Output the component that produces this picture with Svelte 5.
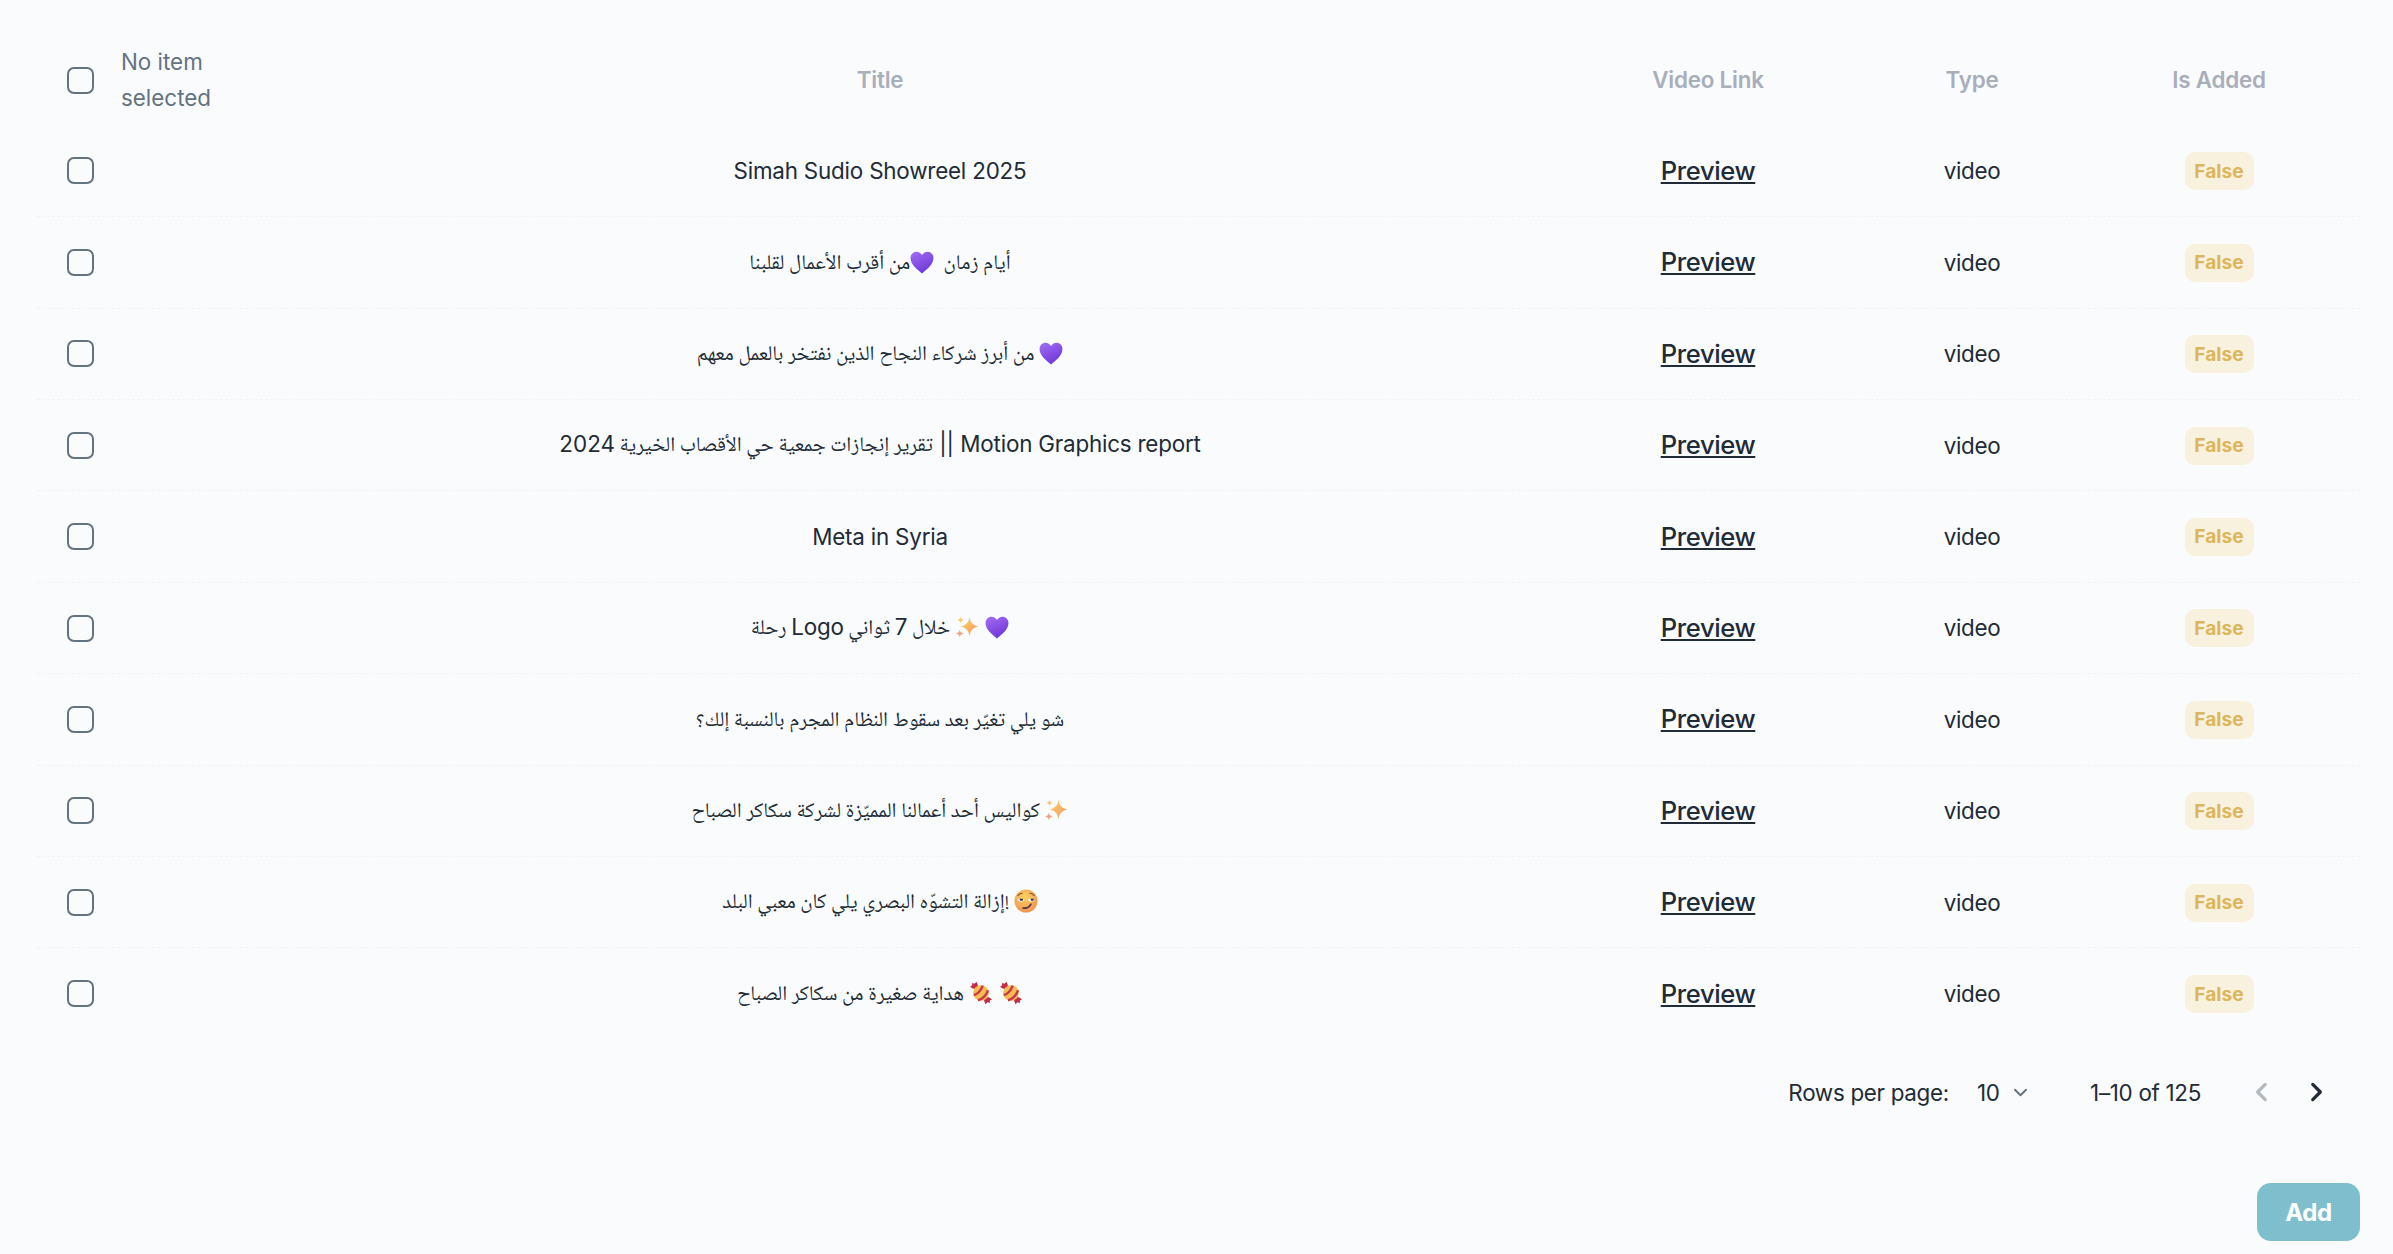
<script lang="ts">
	const rows = [
		{ dir: 'ltr', parts: ['Simah Sudio Showreel 2025'] },
		{ dir: 'rtl', parts: ['أيام زمان\u00a0\u00a0', 'heart', 'من أقرب الأعمال لقلبنا'] },
		{ dir: 'rtl', parts: ['heart', ' من أبرز شركاء النجاح الذين نفتخر بالعمل معهم'] },
		{ dir: 'ltr', parts: ['تقرير إنجازات جمعية حي الأقصاب الخيرية ', '2024', ' ', '|| Motion Graphics report'] },
		{ dir: 'ltr', parts: ['Meta in Syria'] },
		{ dir: 'rtl', parts: ['heart', ' ', 'sparkles', ' خلال ', '7', ' ثواني ', 'Logo', ' رحلة'] },
		{ dir: 'rtl', parts: ['شو يلي تغيّر بعد سقوط النظام المجرم بالنسبة إلك؟'] },
		{ dir: 'rtl', parts: ['sparkles', ' كواليس أحد أعمالنا المميّزة لشركة سكاكر الصباح'] },
		{ dir: 'rtl', parts: ['face', ' !إزالة التشوّه البصري يلي كان معبي البلد'] },
		{ dir: 'rtl', parts: ['candy', ' ', 'candy', ' هداية صغيرة من سكاكر الصباح'] }
	];

	const isLatin = (part: string) => /^[\x21-\x7e][\x20-\x7e]*$/.test(part);
	const isArabic = (part: string) => /[\u0600-\u06ff]/.test(part);
</script>

<main class="page">
	<table>
		<colgroup>
			<col class="col-check" />
			<col class="col-title" />
			<col class="col-link" />
			<col class="col-type" />
			<col class="col-added" />
		</colgroup>
		<thead>
			<tr>
				<th class="select-cell">
					<div class="select-head">
						<input type="checkbox" aria-label="Select all" />
						<span class="selected-label">No item selected</span>
					</div>
				</th>
				<th>Title</th>
				<th>Video Link</th>
				<th>Type</th>
				<th>Is Added</th>
			</tr>
		</thead>
		<tbody>
			{#each rows as row}
				<tr>
					<td class="select-cell"><input type="checkbox" aria-label="Select row" /></td>
					<td>
						<span dir={row.dir}>
							{#each row.parts as part}
								{#if part === 'heart'}
									<svg class="emoji" viewBox="1 1 22 22">
										<defs>
											<linearGradient id="heart-fill" x1="0.2" y1="0" x2="0.7" y2="1">
												<stop offset="0" stop-color="#a06af2" />
												<stop offset="1" stop-color="#6a35d8" />
											</linearGradient>
										</defs>
										<path d="M12 22.500C7 18.500 1.500 14 1.500 8.300 1.500 4.800 4 2.500 7 2.500c2.200 0 3.900 1.200 5 3 1.100-1.800 2.800-3 5-3 3 0 5.500 2.300 5.500 5.800 0 5.700-5.500 10.200-10.500 14.200z" fill="url(#heart-fill)" />
									</svg>
								{:else if part === 'sparkles'}
									<svg class="emoji" viewBox="0 0 24 24">
										<defs>
											<linearGradient id="spark-fill" x1="0" y1="0" x2="1" y2="1">
												<stop offset="0" stop-color="#fcd06a" />
												<stop offset="1" stop-color="#f59a5b" />
											</linearGradient>
										</defs>
										<path d="M14.500 2c1 5.800 3 8 9 9.500-6 1.500-8 3.700-9 9.500-1-5.800-3-8-9-9.500 6-1.500 8-3.700 9-9.500z" fill="url(#spark-fill)" />
										<path d="M5.500 1.500c.4 2.200 1.100 2.900 3.200 3.400-2.100.5-2.800 1.200-3.200 3.400-.4-2.200-1.100-2.900-3.200-3.400 2.100-.5 2.800-1.200 3.200-3.400z" fill="#f9c777" />
										<path d="M4.800 14.500c.4 2.600 1.400 3.500 4 4-2.600.5-3.600 1.400-4 4-.4-2.600-1.400-3.500-4-4 2.600-.5 3.600-1.400 4-4z" fill="#f4a184" />
									</svg>
								{:else if part === 'face'}
									<svg class="emoji" viewBox="0 0 24 24">
										<defs>
											<radialGradient id="face-fill" cx="0.45" cy="0.35" r="0.75">
												<stop offset="0" stop-color="#fcd45f" />
												<stop offset="1" stop-color="#ee8a4e" />
											</radialGradient>
										</defs>
										<circle cx="12" cy="12" r="11.500" fill="url(#face-fill)" />
										<path d="M4 6.500c1-1.500 2.500-2.300 4-2.300M16 4.200c1.500 0 3 .8 4 2.300" fill="none" stroke="#6b4a32" stroke-width="1.100" stroke-linecap="round" />
										<path d="M3.500 9.800h6.500c0 2-1.400 2.800-3.200 2.800S3.500 11.500 3.500 9.800zM14 9.800h6.500c0 1.700-1.500 2.800-3.300 2.800S14 11.800 14 9.800z" fill="#fff" />
										<path d="M5.500 9.800h3.800c0 1.400-.8 2-1.900 2s-1.900-.6-1.900-2zM16.500 9.800h3.400c0 1.400-.7 2-1.700 2s-1.700-.6-1.700-2z" fill="#3b2a3a" />
										<path d="M9 19c3 .6 6.200-.6 8-3.800" fill="none" stroke="#5b2f4a" stroke-width="1.700" stroke-linecap="round" />
									</svg>
								{:else if part === 'candy'}
									<svg class="emoji" viewBox="0 0 24 24">
										<path d="M7 8 3.500 7.500 1 5.500l2.200-1L3 2l2.500.8L7.500.8 8.800 4l.2 3z" fill="#c42b45" />
										<path d="M17 16l3.500.5L23 18.500l-2.200 1 .2 2.500-2.500-.8-2 2-1.300-3.200-.2-3z" fill="#c42b45" />
										<circle cx="12" cy="12" r="7.800" fill="#f3bd4f" />
										<path d="M4.800 14c3-.3 7-4 9-9.300M9 19.200c4-.6 8.600-5 10-10" fill="none" stroke="#c9364b" stroke-width="2.400" />
									</svg>
								{:else if isArabic(part)}
									<span class="arabic">{part}</span>
								{:else if isLatin(part)}
									<span class="latin">{part}</span>
								{:else}{part}{/if}
							{/each}
						</span>
					</td>
					<td><a class="preview" href="#preview">Preview</a></td>
					<td class="type-cell">video</td>
					<td><span class="badge">False</span></td>
				</tr>
			{/each}
		</tbody>
	</table>

	<footer class="pagination">
		<span>Rows per page:</span>
		<span class="per-page">
			10
			<svg class="caret" viewBox="0 0 24 24"><path d="M5 8.500l7 7 7-7" fill="none" stroke="#637381" stroke-width="2.400" stroke-linecap="round" stroke-linejoin="round" /></svg>
		</span>
		<span class="range">1–10 of 125</span>
		<button class="page-btn" disabled aria-label="Previous page">
			<svg viewBox="0 0 24 24"><path d="M15 5l-7 7 7 7" fill="none" stroke="#b3b9c0" stroke-width="3" stroke-linecap="round" stroke-linejoin="round" /></svg>
		</button>
		<button class="page-btn" aria-label="Next page">
			<svg viewBox="0 0 24 24"><path d="M9 5l7 7-7 7" fill="none" stroke="#212b36" stroke-width="3" stroke-linecap="round" stroke-linejoin="round" /></svg>
		</button>
	</footer>

	<div class="actions">
		<button class="add">Add</button>
	</div>
</main>

<style>
	:global(body) {
		background: #f9fbfd;
	}

	.page {
		box-sizing: border-box;
		height: 1254px;
		padding: 34px 33px 14px 37px;
		font-family: Inter, 'Liberation Sans', sans-serif;
		font-size: 22.4px;
		line-height: 35.2px;
		color: #212b36;
	}

	table {
		width: 2323px;
		table-layout: fixed;
		border-collapse: collapse;
	}

	.col-check {
		width: 173px;
	}
	.col-title {
		width: 1340px;
	}
	.col-link {
		width: 316px;
	}
	.col-type {
		width: 212px;
	}
	.col-added {
		width: 282px;
	}

	tr {
		height: 91.4px;
	}

	tbody tr {
		border-bottom: 1px dashed #f1f3f5;
	}

	tbody tr:last-child {
		border-bottom: 0;
	}

	th,
	td {
		padding: 0;
		text-align: center;
		vertical-align: middle;
	}

	th {
		font-weight: 600;
		color: #a9aebb;
		letter-spacing: -0.2px;
	}

	.select-cell {
		padding-left: 30px;
		text-align: left;
	}

	.select-head {
		display: flex;
		align-items: center;
		gap: 27px;
		letter-spacing: 0;
	}

	.select-head input {
		margin-top: 2px;
	}

	.selected-label {
		font-weight: 400;
		color: #637381;
		text-align: left;
		width: 110px;
	}

	input {
		appearance: none;
		display: block;
		box-sizing: border-box;
		flex: none;
		width: 27px;
		height: 27px;
		margin: 0;
		border: 2.6px solid #637381;
		border-radius: 7px;
		background: transparent;
	}

	.arabic {
		font-family: 'Noto Naskh Arabic', 'Liberation Sans', sans-serif;
		font-size: 20.8px;
		vertical-align: 1.5px;
	}

	.latin {
		letter-spacing: -0.2px;
	}

	.emoji {
		display: inline-block;
		width: 24px;
		height: 24px;
		vertical-align: -4px;
	}

	.preview {
		font-size: 25.6px;
		font-weight: 500;
		letter-spacing: -0.4px;
		color: #212b36;
		text-decoration: underline;
	}

	.type-cell {
		letter-spacing: -0.3px;
	}

	.badge {
		display: inline-flex;
		align-items: center;
		justify-content: center;
		width: 69px;
		height: 38px;
		border-radius: 10px;
		background: #f8f1de;
		color: #dcb65b;
		font-size: 19.2px;
		font-weight: 700;
	}

	.pagination {
		display: flex;
		align-items: center;
		justify-content: flex-end;
		height: 106px;
		padding-right: 26px;
		letter-spacing: -0.3px;
	}

	.per-page {
		display: flex;
		align-items: center;
		margin-left: 28px;
		gap: 11px;
	}

	.caret {
		width: 19px;
		height: 19px;
	}

	.range {
		margin-left: 60.5px;
	}

	.page-btn {
		display: flex;
		align-items: center;
		justify-content: center;
		width: 36px;
		height: 36px;
		padding: 0;
		border: 0;
		background: none;
	}

	.page-btn svg {
		width: 26px;
		height: 26px;
	}

	.range + .page-btn {
		margin-left: 43px;
	}

	.page-btn + .page-btn {
		margin-left: 18px;
	}

	.actions {
		display: flex;
		justify-content: flex-end;
		margin-top: 38px;
	}

	.add {
		width: 103px;
		height: 58px;
		border: 0;
		border-radius: 14px;
		background: #7fbfcd;
		color: #fff;
		font: inherit;
		font-size: 24px;
		font-weight: 700;
		letter-spacing: -0.3px;
	}
</style>
